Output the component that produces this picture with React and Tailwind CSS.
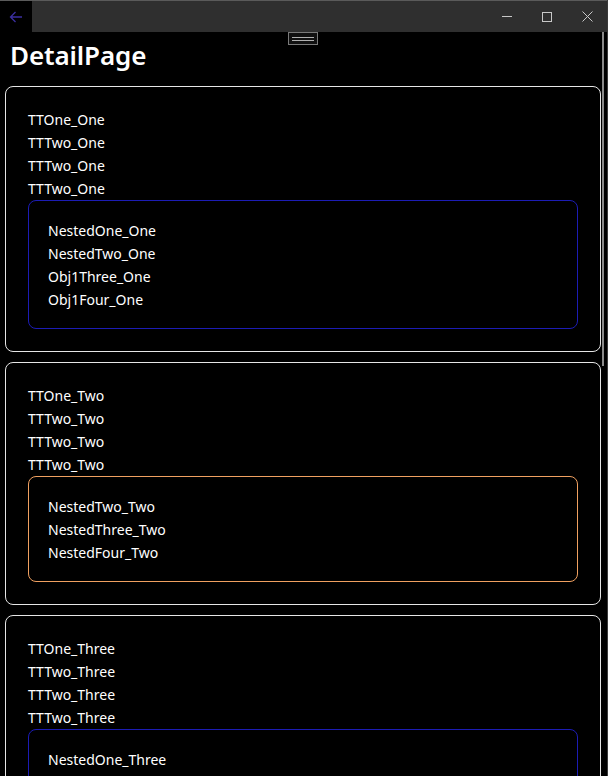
import React from "react";

const font = { fontFamily: '"Segoe UI", "Noto Sans", "Open Sans", sans-serif' };

function Card({ lines, nested, nestedColor }) {
  return (
    <div className="rounded-[8px] border border-[#e6e6e6] pt-[21px] px-[22px] pb-[22px]">
      <div>
        {lines.map((l, i) => (
          <div key={i} className="leading-[23px] text-[14px] text-white">{l}</div>
        ))}
      </div>
      <div className={`rounded-[8px] border ${nestedColor} pt-[18px] pb-[17px] px-[19px]`}>
        {nested.map((l, i) => (
          <div key={i} className="leading-[23px] text-[14px] text-white">{l}</div>
        ))}
      </div>
    </div>
  );
}

export default function App() {
  return (
    <div className="relative w-[608px] h-[776px] bg-black overflow-hidden" style={font}>
      {/* Title bar */}
      <div className="flex h-[32px] border-t border-[#5a5a5a]">
        <div className="w-[32px] flex items-center justify-center bg-black">
          <svg width="14" height="12" viewBox="0 0 14 12" fill="none" stroke="#3b2fa0" strokeWidth="1.3">
            <path d="M13 6H1.5M6.5 1L1.5 6l5 5" />
          </svg>
        </div>
        <div className="flex-1 bg-[#2f2f2f] flex justify-end">
          <div className="w-[40px] flex items-center justify-center">
            <div className="w-[10px] h-px bg-[#c8c8c8]" />
          </div>
          <div className="w-[40px] flex items-center justify-center">
            <div className="w-[10px] h-[10px] border border-[#c8c8c8]" />
          </div>
          <div className="w-[41px] flex items-center justify-center">
            <svg width="11" height="11" viewBox="0 0 11 11" stroke="#c8c8c8" strokeWidth="1">
              <path d="M0.5 0.5l10 10M10.5 0.5l-10 10" />
            </svg>
          </div>
        </div>
      </div>

      {/* In-app toolbar handle */}
      <div className="absolute left-[288px] top-[32px] w-[30px] h-[13px] border border-[#7a7a7a] bg-[#111] flex flex-col items-center justify-center gap-[2px]">
        <div className="w-[22px] h-px bg-[#b0b0b0]" />
        <div className="w-[22px] h-px bg-[#b0b0b0]" />
      </div>

      {/* Scrollbar */}
      <div className="absolute left-[602px] top-[32px] w-[2px] h-[334px] bg-[#8a8a8a]" />
      <div className="absolute right-0 top-0 w-px h-full bg-[#3a3a3a]" />

      <div className="pl-[10px] pt-[1px] h-[54px]">
        <div className="text-[26px] font-semibold text-white leading-[44px] tracking-[-0.1px]">DetailPage</div>
      </div>

      <div className="pl-[5px] pr-[7px] flex flex-col gap-[10px]">
        <Card
          lines={["TTOne_One", "TTTwo_One", "TTTwo_One", "TTTwo_One"]}
          nested={["NestedOne_One", "NestedTwo_One", "Obj1Three_One", "Obj1Four_One"]}
          nestedColor="border-[#1c1cb4]"
        />
        <Card
          lines={["TTOne_Two", "TTTwo_Two", "TTTwo_Two", "TTTwo_Two"]}
          nested={["NestedTwo_Two", "NestedThree_Two", "NestedFour_Two"]}
          nestedColor="border-[#f0a060]"
        />
        <Card
          lines={["TTOne_Three", "TTTwo_Three", "TTTwo_Three", "TTTwo_Three"]}
          nested={["NestedOne_Three"]}
          nestedColor="border-[#1c1cb4]"
        />
      </div>
    </div>
  );
}
